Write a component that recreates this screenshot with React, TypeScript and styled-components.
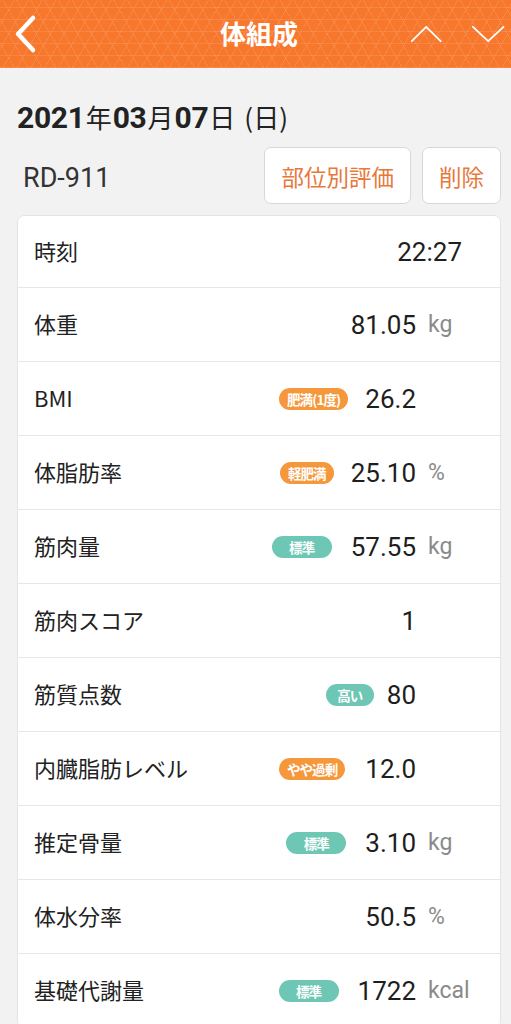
import React from 'react'
import styled, { createGlobalStyle } from 'styled-components'

const GlobalStyle = createGlobalStyle`
  html, body {
    margin: 0;
    padding: 0;
    background: #f2f2f2;
    font-family: Roboto, "Noto Sans CJK JP", sans-serif;
  }
`

const Page = styled.div`
  width: 511px;
  min-height: 1024px;
  background: #f2f2f2;
  overflow: hidden;
`

const TopBar = styled.header`
  height: 68px;
  display: flex;
  align-items: center;
  justify-content: space-between;
  padding: 0 3px 0 12px;
  box-sizing: border-box;
  background-color: #f7772c;
  background-image:
    repeating-linear-gradient(0deg, rgba(255, 255, 255, 0.1) 0 1px, transparent 1px 12px),
    repeating-linear-gradient(60deg, rgba(255, 255, 255, 0.1) 0 1px, transparent 1px 12px),
    repeating-linear-gradient(120deg, rgba(255, 255, 255, 0.1) 0 1px, transparent 1px 12px);
`

const BarTitle = styled.h1`
  margin: 0 0 3px 66px;
  color: #fff;
  font-size: 26px;
  font-weight: 700;
  font-family: "Noto Sans CJK JP", sans-serif;
`

const IconButton = styled.button`
  background: none;
  border: none;
  padding: 0;
  display: flex;
  align-items: center;
  justify-content: center;
  width: ${props => props.$w || 40}px;
  height: 44px;
`

const NavGroup = styled.div`
  display: flex;
  gap: 26px;
`

const Body = styled.div`
  padding: 0 10px 0 17px;
`

const DateLine = styled.div`
  margin-top: 30px;
  height: 38px;
  display: flex;
  align-items: baseline;
  color: #222;
`

const DateNum = styled.span`
  font-size: 30px;
  font-weight: 700;
  font-family: Roboto, sans-serif;
  letter-spacing: -0.3px;
`

const DateKanji = styled.span`
  font-size: 26px;
  font-family: "Noto Sans CJK JP", sans-serif;
  margin: 0 1px;
`

const Weekday = styled.span`
  font-size: 26px;
  font-family: "Noto Sans CJK JP", sans-serif;
  margin-left: 8px;
`

const DeviceRow = styled.div`
  margin-top: 11px;
  display: flex;
  align-items: center;
  height: 57px;
`

const DeviceName = styled.div`
  flex: 1;
  padding: 4px 0 0 6px;
  font-size: 27px;
  color: #333;
  font-family: Roboto, sans-serif;
`

const ActionButton = styled.button`
  height: 57px;
  padding: 0 ${props => props.$pad || 16}px;
  margin-left: 11px;
  background: #fff;
  border: 1px solid #d8d8d8;
  border-radius: 7px;
  color: #e8773a;
  font-size: 22.5px;
  font-family: "Noto Sans CJK JP", sans-serif;
`

const Card = styled.div`
  margin-top: 11px;
  background: #fff;
  border: 1px solid #e4e4e4;
  border-radius: 7px;
`

const Row = styled.div`
  height: 73px;
  display: flex;
  align-items: center;
  padding: 0 16px 0 16px;
  border-top: 1px solid #e6e6e6;

  &:first-child {
    border-top: none;
    height: 71px;
  }
`

const Label = styled.div`
  flex: 1;
  font-size: 22px;
  line-height: 1;
  padding-bottom: 3px;
  color: #222;
  font-family: "Noto Sans CJK JP", sans-serif;
`

const Badge = styled.span`
  display: inline-flex;
  align-items: center;
  justify-content: center;
  height: 22px;
  min-width: ${props => props.$min || 0}px;
  padding: 0 8px;
  border-radius: 11px;
  background: ${props => (props.$tone === 'orange' ? '#f5973b' : '#6ec7b4')};
  color: #fff;
  font-size: 13.5px;
  font-weight: 700;
  letter-spacing: -0.9px;
  font-family: "Noto Sans CJK JP", sans-serif;
  margin-right: ${props => props.$gap || 17}px;
  box-sizing: border-box;
`

const Value = styled.span`
  font-size: 26px;
  color: #1e1e1e;
  font-family: Roboto, sans-serif;
  margin-right: ${props => props.$end || 0}px;
`

const Unit = styled.span`
  width: 56px;
  margin-left: 12px;
  font-size: 23px;
  color: #8a8a8a;
  font-family: Roboto, sans-serif;
`

type Item = {
  label: string
  value: string
  unit?: string
  badge?: { text: string; tone: 'orange' | 'teal'; min?: number; gap?: number }
  end?: number
}

const items: Item[] = [
  { label: '時刻', value: '22:27', end: 22 },
  { label: '体重', value: '81.05', unit: 'kg' },
  { label: 'BMI', value: '26.2', unit: '', badge: { text: '肥満(1度)', tone: 'orange' } },
  { label: '体脂肪率', value: '25.10', unit: '%', badge: { text: '軽肥満', tone: 'orange' } },
  { label: '筋肉量', value: '57.55', unit: 'kg', badge: { text: '標準', tone: 'teal', min: 60, gap: 19 } },
  { label: '筋肉スコア', value: '1', unit: '' },
  { label: '筋質点数', value: '80', unit: '', badge: { text: '高い', tone: 'teal', min: 48, gap: 13 } },
  { label: '内臓脂肪レベル', value: '12.0', unit: '', badge: { text: 'やや過剰', tone: 'orange', gap: 20 } },
  { label: '推定骨量', value: '3.10', unit: 'kg', badge: { text: '標準', tone: 'teal', min: 60, gap: 19 } },
  { label: '体水分率', value: '50.5', unit: '%' },
  { label: '基礎代謝量', value: '1722', unit: 'kcal', badge: { text: '標準', tone: 'teal', min: 60, gap: 19 } },
]

const Chevron = ({ d, w = 2 }: { d: string; w?: number }) => (
  <svg width="40" height="40" viewBox="0 0 40 40" fill="none">
    <path d={d} stroke="#fff" strokeWidth={w} strokeLinecap="round" strokeLinejoin="round" />
  </svg>
)

export default function App() {
  return (
    <Page>
      <GlobalStyle />
      <TopBar>
        <IconButton $w={30}>
          <svg width="30" height="44" viewBox="0 0 30 44" fill="none">
            <path d="M21 6 L6 22 L21 38" stroke="#fff" strokeWidth={4.5} strokeLinecap="round" strokeLinejoin="round" />
          </svg>
        </IconButton>
        <BarTitle>体組成</BarTitle>
        <NavGroup>
          <IconButton $w={36}>
            <Chevron d="M2 28 L18 12 L34 28" />
          </IconButton>
          <IconButton $w={36}>
            <Chevron d="M1 12 L18 28 L35 12" />
          </IconButton>
        </NavGroup>
      </TopBar>
      <Body>
        <DateLine>
          <DateNum>2021</DateNum>
          <DateKanji>年</DateKanji>
          <DateNum>03</DateNum>
          <DateKanji>月</DateKanji>
          <DateNum>07</DateNum>
          <DateKanji>日</DateKanji>
          <Weekday>(日)</Weekday>
        </DateLine>
        <DeviceRow>
          <DeviceName>RD-911</DeviceName>
          <ActionButton $pad={16}>部位別評価</ActionButton>
          <ActionButton $pad={16}>削除</ActionButton>
        </DeviceRow>
        <Card>
          {items.map(item => (
            <Row key={item.label}>
              <Label>{item.label}</Label>
              {item.badge && (
                <Badge $tone={item.badge.tone} $min={item.badge.min} $gap={item.badge.gap}>
                  {item.badge.text}
                </Badge>
              )}
              <Value $end={item.end}>{item.value}</Value>
              {item.unit !== undefined && <Unit>{item.unit}</Unit>}
            </Row>
          ))}
        </Card>
      </Body>
    </Page>
  )
}
